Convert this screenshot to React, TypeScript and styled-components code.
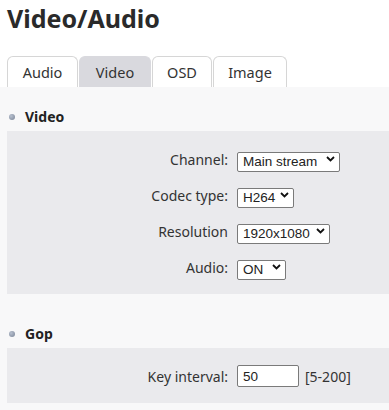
import React from "react";
import styled, { createGlobalStyle } from "styled-components";

const GlobalStyle = createGlobalStyle`
  html, body {
    margin: 0;
    padding: 0;
    background: #ffffff;
    font-family: "Noto Sans", "Open Sans", Arial, sans-serif;
    color: #333;
    overflow: hidden;
  }
`;

const Page = styled.div`
  width: 389px;
  min-height: 410px;
  display: flex;
  flex-direction: column;
`;

const Title = styled.h1`
  margin: 0;
  padding: 1px 0 0 7px;
  height: 36px;
  font-size: 25px;
  line-height: 34px;
  font-weight: 700;
  color: #2a2a2a;
`;

const Tabs = styled.div`
  display: flex;
  padding: 19px 0 0 7px;
`;

const Tab = styled.div<{ $active?: boolean; $w: number }>`
  box-sizing: border-box;
  height: 31px;
  width: ${(p) => p.$w}px;
  margin-right: 1px;
  display: flex;
  align-items: center;
  justify-content: center;
  font-size: 14.5px;
  color: #333;
  border: 1px solid ${(p) => (p.$active ? "#d9d9de" : "#d6d6d6")};
  border-bottom: none;
  border-radius: 6px 6px 0 0;
  background: ${(p) => (p.$active ? "#d9d9de" : "#ffffff")};
`;

const Panel = styled.div`
  flex: 1;
  background: #f8f8f9;
  padding: 15px 0 6px 0;
`;

const SectionHead = styled.div<{ $gap?: number }>`
  display: flex;
  align-items: center;
  height: 29px;
  margin-top: ${(p) => p.$gap ?? 0}px;
  padding-left: 9px;
  font-size: 14px;
  font-weight: 700;
  color: #222;
`;

const Bullet = styled.span`
  width: 6px;
  height: 6px;
  border-radius: 50%;
  background: radial-gradient(circle at 35% 35%, #b7c0cf, #7a8496);
  margin-right: 10px;
`;

const Box = styled.div<{ $pt: number; $pb: number }>`
  margin-left: 7px;
  background: #eaeaed;
  padding: ${(p) => p.$pt}px 0 ${(p) => p.$pb}px 0;
  display: flex;
  flex-direction: column;
  gap: 16px;
`;

const Row = styled.div<{ $h?: number }>`
  display: flex;
  align-items: center;
  height: ${(p) => p.$h ?? 20}px;
`;

const Label = styled.span`
  width: 230px;
  padding-right: 9px;
  box-sizing: border-box;
  text-align: right;
  font-size: 14px;
  color: #333;
  white-space: nowrap;
`;

const SelectWrap = styled.div<{ $w: number }>`
  position: relative;
  width: ${(p) => p.$w}px;
  height: 20px;
`;

const Select = styled.select`
  appearance: none;
  -webkit-appearance: none;
  box-sizing: border-box;
  width: 100%;
  height: 100%;
  margin: 0;
  padding: 0 15px 0 5px;
  border: 1px solid #7a7a7a;
  border-radius: 2px;
  background: #ffffff;
  font-family: "Liberation Sans", Arial, sans-serif;
  font-size: 13.5px;
  color: #222;
  outline: none;
`;

const Chevron = styled.svg`
  position: absolute;
  right: 5px;
  top: 7px;
  pointer-events: none;
`;

const Input = styled.input`
  box-sizing: border-box;
  width: 62px;
  height: 22px;
  margin: 0;
  padding: 0 0 0 5px;
  border: 1px solid #7a7a7a;
  border-radius: 2px;
  background: #ffffff;
  font-family: "Liberation Sans", Arial, sans-serif;
  font-size: 13.5px;
  color: #222;
  outline: none;
`;

const Hint = styled.span`
  margin-left: 6px;
  font-size: 14px;
  color: #333;
`;

type DropProps = { w: number; value: string; options: string[] };

const Drop = ({ w, value, options }: DropProps) => (
  <SelectWrap $w={w}>
    <Select defaultValue={value}>
      {options.map((o) => (
        <option key={o}>{o}</option>
      ))}
    </Select>
    <Chevron width="9" height="6" viewBox="0 0 9 6">
      <path d="M1 1 L4.5 4.5 L8 1" fill="none" stroke="#111" strokeWidth="1.8" />
    </Chevron>
  </SelectWrap>
);

const tabs = [
  { name: "Audio", w: 71 },
  { name: "Video", w: 72, active: true },
  { name: "OSD", w: 60 },
  { name: "Image", w: 74 },
];

export default function App() {
  return (
    <Page>
      <GlobalStyle />
      <Title>Video/Audio</Title>
      <Tabs>
        {tabs.map((t) => (
          <Tab key={t.name} $w={t.w} $active={t.active}>
            {t.name}
          </Tab>
        ))}
      </Tabs>
      <Panel>
        <SectionHead>
          <Bullet />
          Video
        </SectionHead>
        <Box $pt={18} $pb={17}>
          <Row>
            <Label>Channel:</Label>
            <Drop w={103} value="Main stream" options={["Main stream", "Sub stream"]} />
          </Row>
          <Row>
            <Label>Codec type:</Label>
            <Drop w={57} value="H264" options={["H264", "H265"]} />
          </Row>
          <Row>
            <Label>Resolution</Label>
            <Drop w={93} value="1920x1080" options={["1920x1080", "1280x720"]} />
          </Row>
          <Row>
            <Label>Audio:</Label>
            <Drop w={49} value="ON" options={["ON", "OFF"]} />
          </Row>
        </Box>
        <SectionHead $gap={25}>
          <Bullet />
          Gop
        </SectionHead>
        <Box $pt={17} $pb={16}>
          <Row $h={22}>
            <Label>Key interval:</Label>
            <Input defaultValue="50" />
            <Hint>[5-200]</Hint>
          </Row>
        </Box>
      </Panel>
    </Page>
  );
}
